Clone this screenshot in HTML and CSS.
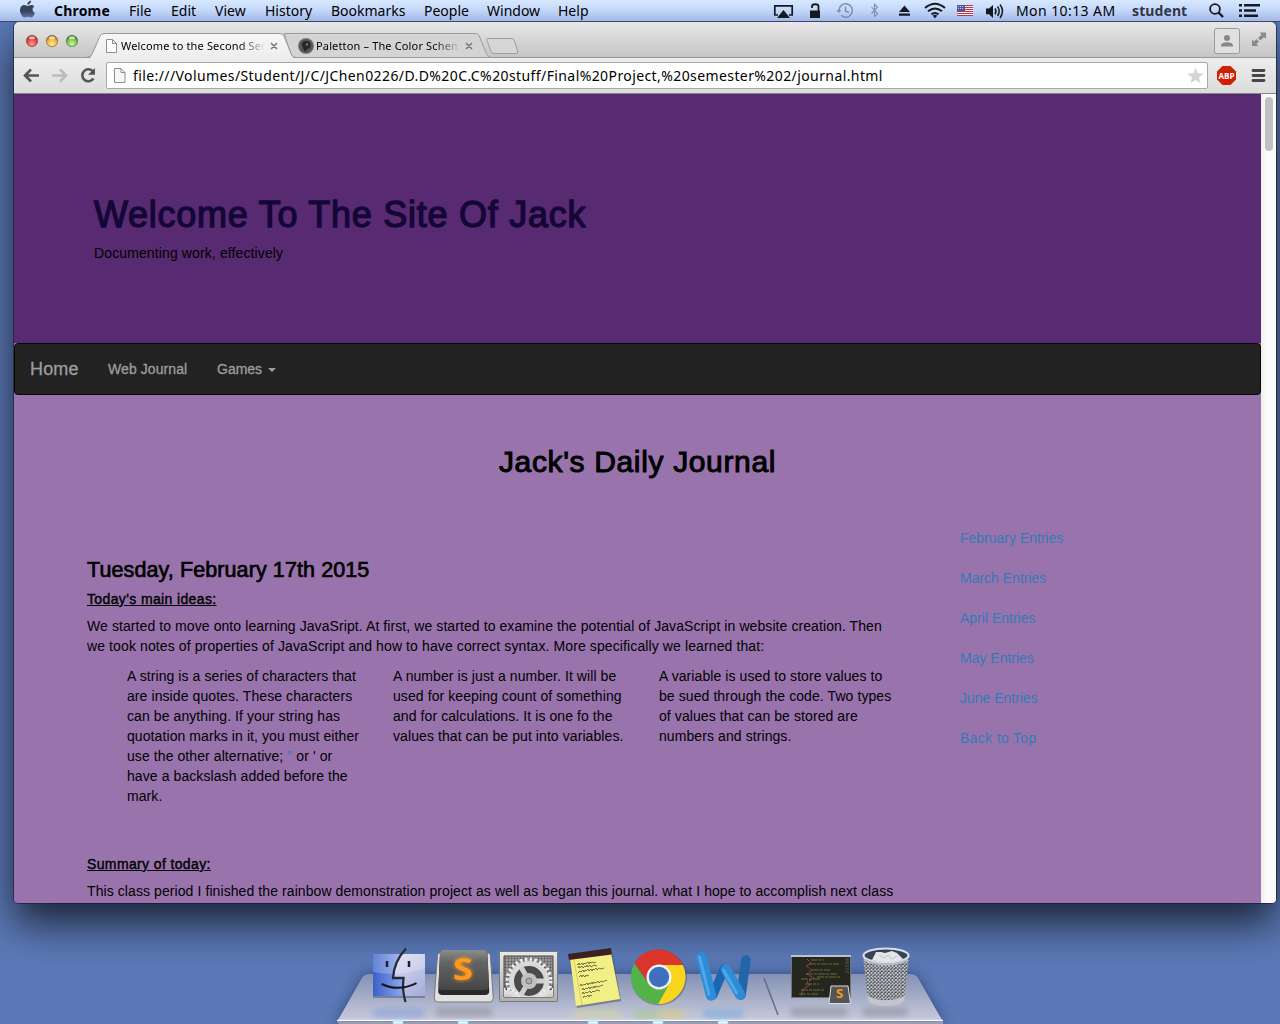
FILE: index.html
```html
<!DOCTYPE html>
<html lang="en">
<head>
<meta charset="utf-8">
<title>Welcome to the Second Semester</title>
<link rel="stylesheet" href="styles.css">
</head>
<body>
<div class="desktop">
  <header class="menubar">
    <svg class="apple" width="18" height="20" viewBox="18 1 18 20"><defs><linearGradient id="ap" x1="0" y1="0" x2="0" y2="1"><stop offset="0" stop-color="#3f4653"/><stop offset=".6" stop-color="#35405a"/><stop offset="1" stop-color="#5c75a6"/></linearGradient></defs><path fill="url(#ap)" d="M31.200 1.500c.1 2-1.800 4.300-4 4.200-.2-2 1.800-4 4-4.200zM34.300 7.500c-2.600 1.600-2.200 5.200.6 6.400-.8 2.200-2.200 4.600-3.900 4.600-1.300 0-1.700-.8-3.200-.8s-2 .8-3.200.8c-2 0-4.600-3.900-4.600-7.300 0-3.300 2.100-5.100 4.200-5.100 1.400 0 2.500.9 3.400.9.8 0 2.100-1 3.900-1 1.100 0 2.200.6 2.800 1.500z"/></svg>
    <nav class="menus">
      <b class="w-chrome">Chrome</b><span class="w-file">File</span><span class="w-edit">Edit</span><span class="w-view">View</span><span class="w-history">History</span><span class="w-bookmarks">Bookmarks</span><span class="w-people">People</span><span class="w-window">Window</span><span>Help</span>
    </nav>
    <svg class="status" width="236" height="21" viewBox="770 0 236 21">
      <path d="M778 15h-3.200V5.800h17.400V15H789" fill="none" stroke="#151a22" stroke-width="1.700"/><path d="M783.500 10l6.500 8h-13z" fill="#151a22"/>
      <path d="M810 10.500h10V18h-10z" fill="#151a22"/><path d="M812 8V6.500c0-3 6.500-3 6.500 0V11" fill="none" stroke="#151a22" stroke-width="1.800"/>
      <g fill="none" stroke="#7d8eb0" stroke-width="1.500"><path d="M839 10.500a6.700 6.700 0 1 1 2 4.800M845.500 6.500v4.500l3.500 1.500"/></g><path d="M836.500 10h5l-2.500 3z" fill="#7d8eb0"/>
      <path d="M871.500 7l6 6.500-3 3V4.300l3 3-6 6.200" fill="none" stroke="#7d8eb0" stroke-width="1.100"/>
      <path d="M904.500 5.500l5.500 6.500h-11zM899 13.500h11v2.200h-11z" fill="#151a22"/>
      <g fill="none" stroke="#151a22" stroke-width="2"><path d="M925 8q10-8.500 20 0M928 11.300q7-5.500 14 0M931.500 14.400q3.500-2.700 7 0"/></g><path d="M932.700 15.700q2.300-1.700 4.600 0l-2.300 2.600z" fill="#151a22"/>
      <path fill="#f4eef0" d="M957 5h16v11h-16z"/><path stroke="#b9394b" stroke-width="1" d="M957 5.500h16M957 7.500h16M957 9.500h16M957 11.500h16M957 13.500h16M957 15.500h16"/><path fill="#4b5599" d="M957 5h8v6h-8z"/><path stroke="#cdd1e8" stroke-width="1" stroke-dasharray="1 1" d="M958 6.500h6M958 8.500h6"/>
      <path d="M986 8.500h3l4-3.500v13l-4-3.700h-3z" fill="#151a22"/><g fill="none" stroke="#151a22" stroke-width="1.500"><path d="M995 8.500q2 2.800 0 5.800M997.500 6.500q3.500 4.500 0 9.500M1000 4.500q5 6.500 0 13.500"/></g>
    </svg>
    <span class="clock">Mon 10:13 AM</span><b class="user">student</b>
    <svg width="54" height="21" viewBox="1206 0 54 21"><circle cx="1215" cy="9" r="4.900" fill="none" stroke="#151a22" stroke-width="1.800"/><path d="M1218.500 12.500l4.500 4.500" stroke="#151a22" stroke-width="2.400"/><path stroke="#151a22" stroke-width="2.600" d="M1239 5.300h3M1239 10.500h3M1239 15.700h3M1244 5.300h16M1244 10.500h12M1244 15.700h14"/></svg>
  </header>

  <main class="window">
    <div class="tabstrip">
      <svg class="tabs-art" width="1262" height="36" viewBox="14 22 1262 36">
        <defs>
          <radialGradient id="r" cx=".5" cy=".75" r=".7"><stop offset="0" stop-color="#ff9a92"/><stop offset=".6" stop-color="#e5453f"/><stop offset="1" stop-color="#9c2b29"/></radialGradient>
          <radialGradient id="y" cx=".5" cy=".75" r=".7"><stop offset="0" stop-color="#ffe98e"/><stop offset=".6" stop-color="#eeb440"/><stop offset="1" stop-color="#96651c"/></radialGradient>
          <radialGradient id="g" cx=".5" cy=".75" r=".7"><stop offset="0" stop-color="#d0f7a4"/><stop offset=".6" stop-color="#79c152"/><stop offset="1" stop-color="#3c7329"/></radialGradient>
          <linearGradient id="t" x1="0" y1="0" x2="0" y2="1"><stop offset="0" stop-color="#f7f7f7"/><stop offset="1" stop-color="#ededed"/></linearGradient>
        </defs>
        <path d="M14 57.500H1276" stroke="#999"/>
        <path d="M284 33.500h191.500q2.800 0 3.800 2.500l7 17.500q1.500 4 4.700 4H292z" fill="#d4d4d4" stroke="#9b9b9b"/>
        <path d="M487.500 38.500h24q2 0 2.800 2l3.300 10.500q.6 2.500-1.500 2.500h-22q-2.200 0-3-2l-4.200-11q-.6-2 .6-2z" fill="#d6d6d6" stroke="#9d9d9d"/>
        <path d="M88 58.500q2.800 0 4.200-3.500l7.600-18.500q1.200-3 4.200-3h176q3 0 4.200 3l7 18q1.300 4 4.800 4z" fill="url(#t)"/>
        <path d="M86 57.500q4.500 0 6.200-3.500l7.600-17.500q1.200-3 4.200-3h176q3 0 4.200 3l7 17.500q1.500 3.500 5 3.500" fill="none" stroke="#989898"/>
        <g stroke-width=".7"><circle cx="32" cy="41" r="5.700" fill="url(#r)" stroke="#8e4a48"/><circle cx="52" cy="41" r="5.700" fill="url(#y)" stroke="#8b6a34"/><circle cx="72" cy="41" r="5.700" fill="url(#g)" stroke="#557b42"/></g><g fill="#fff" opacity=".65"><ellipse cx="32" cy="37.800" rx="3" ry="1.500"/><ellipse cx="52" cy="37.800" rx="3" ry="1.500"/><ellipse cx="72" cy="37.800" rx="3" ry="1.500"/></g>
        <path d="M106.500 39.500h6l4 4v9h-10zM112.500 39.500v4h4" fill="#fff" stroke="#8e8e8e"/>
        <path d="M271 43l6 6m0-6l-6 6M466 43l6 6m0-6l-6 6" stroke="#777" stroke-width="1.500"/>
        <circle cx="306" cy="46" r="8" fill="#7f7f7f"/><circle cx="306" cy="46" r="7" fill="#555"/><path d="M306 41a4 4 0 0 1 1 8l-2 3-2-4-1-3q0-4 4-4z" fill="#252525"/><circle cx="307" cy="44.500" r="1.300" fill="#777"/>
        <rect x="1214.500" y="28.500" width="25" height="25" rx="2" fill="#e0e0e0" stroke="#9b9b9b"/><circle cx="1227" cy="38" r="3" fill="#878787"/><path d="M1221 46.500v-1.500q1-2.700 6-2.700t6 2.700v1.500z" fill="#878787"/>
        <path d="M1259.500 32.500h6.500v6.500l-2-2-3.500 3.500-2.500-2.500 3.500-3.500zM1252 39.500l2 2 2.500-2.500 2.500 2.500-2.500 2.500 2 2H1252z" fill="#8b8b8b"/>
      </svg>
      <div class="tab first">Welcome to the Second Ser</div>
      <div class="tab second">Paletton – The Color Schem</div>
    </div>
    <div class="toolbar">
      <svg width="92" height="35" viewBox="14 58 92 35"><g fill="none" stroke-width="2.600"><path d="M39 75.500H25.500M31 69.500l-6 6 6 6" stroke="#555"/><path d="M52 75.500h13.500M60 69.500l6 6-6 6" stroke="#bbb"/><path d="M93 71.500a6 6 0 1 0 .4 7" stroke="#555"/></g><path d="M95 68v6.800h-7z" fill="#555"/></svg>
      <div class="omnibox">
        <svg width="26" height="25" viewBox="107 63 26 25"><path d="M114.500 68.500h6.500l4 4v10h-10.500zM121 68.500v4h4" fill="#f7f7f7" stroke="#8e8e8e"/></svg>
        <span class="url">file:///Volumes/Student/J/C/JChen0226/D.D%20C.C%20stuff/Final%20Project,%20semester%202/journal.html</span>
        <svg width="22" height="25" viewBox="1184 63 22 25"><path fill="#d5d5d5" d="M1194.500 67.500l2.200 5.700 6.100.3-4.800 3.900 1.700 6-5.200-3.400-5.200 3.400 1.700-6-4.800-3.900 6.100-.3z"/></svg>
      </div>
      <svg width="68" height="35" viewBox="1208 58 68 35"><path d="M1222.500 66h8l5.500 5.500v8l-5.500 5.500h-8l-5.500-5.500v-8z" fill="#d02003"/><text x="1226.500" y="79" class="abp" textLength="16" lengthAdjust="spacingAndGlyphs">ABP</text><path d="M1253 70.500h11M1253 75.500h11M1253 80.500h11" stroke="#474747" stroke-width="2.800" stroke-linecap="round"/></svg>
    </div>

    <div class="viewport">
      <div class="page">
        <section class="hero">
          <h1>Welcome To The Site Of Jack</h1>
          <p>Documenting work, effectively</p>
        </section>
        <nav class="navbar"><span class="brand">Home</span><span class="journal-link">Web Journal</span><span>Games<i class="caret"></i></span></nav>
        <h2>Jack's Daily Journal</h2>
        <div class="content">
          <article>
            <h3>Tuesday, February 17th 2015</h3>
            <h5>Today's main ideas:</h5>
            <p>We started to move onto learning JavaSript. At first, we started to examine the potential of JavaScript in website creation. Then<br><span class="loose">we took notes of properties of JavaScript and how to have correct syntax. More specifically we learned that:</span></p>
            <div class="columns">
              <p>A string is a series of characters that<br>are inside quotes. These characters<br>can be anything. If your string has<br>quotation marks in it, you must either<br>use the other alternative; <a>"</a> or ' or<br>have a backslash added before the<br>mark.</p>
              <p>A number is just a number. It will be<br>used for keeping count of something<br>and for calculations. It is one fo the<br>values that can be put into variables.</p>
              <p>A variable is used to store values to<br>be sued through the code. Two types<br>of values that can be stored are<br>numbers and strings.</p>
            </div>
            <h5 class="summary">Summary of today:</h5>
            <p>This class period I finished the rainbow demonstration project as well as began this journal. what I hope to accomplish next class</p>
          </article>
          <aside><a>February Entries</a><a>March Entries</a><a>April Entries</a><a>May Entries</a><a>June Entries</a><a class="top-link">Back to Top</a></aside>
        </div>
      </div>
      <div class="scrollbar"><div class="thumb"></div></div>
    </div>
  </main>

  <footer class="dock">
    <svg class="shelf" width="640" height="90" viewBox="320 934 640 90">
      <defs><linearGradient id="sh" x1="0" y1="0" x2="0" y2="1"><stop offset="0" stop-color="#8491b5"/><stop offset=".5" stop-color="#a5adc6"/><stop offset="1" stop-color="#c8cadc"/></linearGradient><filter id="bl" x="-20%" y="-40%" width="140%" height="180%"><feGaussianBlur stdDeviation="7"/></filter><filter id="b2" x="-50%" y="-50%" width="200%" height="200%"><feGaussianBlur stdDeviation="3"/></filter></defs>
      <path d="M364 974H916L944 1024H336z" fill="#1c2c52" opacity=".6" filter="url(#bl)"/>
      <path d="M370 974H910q6 0 8 4L942 1020H338L362 978q2-4 8-4z" fill="url(#sh)"/>
      <g filter="url(#b2)" opacity=".35"><path fill="#5c80df" d="M373 1009h52v9h-52z"/><path fill="#555" d="M436 1009h56v7h-56zM791 1009h56v7h-56zM863 1009h44v7h-44z"/><path fill="#e6e66a" d="M574 1010h46v8h-46z"/><path fill="#8dce49" d="M634 1010h25v9h-25z"/><path fill="#f5d42d" d="M659 1010h25v9h-25z"/><path fill="#328fe4" d="M703 1010h40v8h-40z"/></g>
      <path d="M337 1020.500H943" stroke="#f5f6fc" stroke-width="1.500"/><path d="M337 1021.500H943v2.500H339z" fill="#989db3"/>
      <g fill="#e9fbff" stroke="#8ecdf7" stroke-width=".7"><path d="M393 1021h10v3h-10zM458 1021h10v3h-10zM588 1021h10v3h-10zM653 1021h10v3h-10zM718 1021h10v3h-10z"/></g>
    </svg>
    <div class="apps">
      <svg width="65" height="80" viewBox="366 940 65 80"><defs><linearGradient id="f1" x1="0" y1="0" x2="1" y2="0"><stop offset="0" stop-color="#3a60c8"/><stop offset="1" stop-color="#91aaf0"/></linearGradient><linearGradient id="f2" x1="0" y1="0" x2="1" y2="1"><stop offset="0" stop-color="#e6e8fc"/><stop offset="1" stop-color="#a6acd8"/></linearGradient></defs><path fill="#33416c" opacity=".4" d="M373 994h52v4h-52z"/><path fill="url(#f2)" d="M373 954h52v42h-52z"/><path fill="url(#f1)" d="M373 954h28q-7 11-8 24h11v18h-31z"/><path fill="#fff" opacity=".22" d="M373 954h52v14q-26 9-52 4z"/><path d="M406 948.500q-12 13-13 29.500h10.500q-1.500 13 2 24" fill="none" stroke="#272a31" stroke-width="2.300"/><path d="M387 961v6M409 961v6" stroke="#182035" stroke-width="2.500"/><path d="M381.500 984q17 8 35-.8" fill="none" stroke="#141820" stroke-width="2"/></svg>
      <svg width="65" height="80" viewBox="431 940 65 80"><defs><linearGradient id="s1" x1="0" y1="0" x2="0" y2="1"><stop offset="0" stop-color="#8d8d8d"/><stop offset=".3" stop-color="#646464"/><stop offset="1" stop-color="#454545"/></linearGradient></defs><path d="M440 953h48q2 0 2.300 2l3 43q0 4-3.500 4h-52q-3.500 0-3.500-4l3.300-43q.3-2 2.400-2z" fill="#e1e1e1" stroke="#777"/><path d="M443 950h41q3 0 3.400 3l1.800 38q0 4-4 4h-43q-4 0-4-4l1.800-38q.3-3 3-3z" fill="#292929"/><path d="M443 950h41q3 0 3.400 3l1.500 33q0 4-4 4h-42.400q-4 0-4-4l1.500-33q.3-3 3-3z" fill="url(#s1)"/><text x="463" y="980" class="sublime" textLength="20" lengthAdjust="spacingAndGlyphs">S</text></svg>
      <svg width="65" height="80" viewBox="496 940 65 80"><defs><linearGradient id="p1" x1="0" y1="0" x2="0" y2="1"><stop offset="0" stop-color="#e8e8e8"/><stop offset="1" stop-color="#b0b0b0"/></linearGradient><pattern id="mesh" width="3" height="3" patternUnits="userSpaceOnUse"><path fill="#999" d="M0 0h3v3H0z"/><circle cx="1.500" cy="1.500" r="1" fill="#565656"/></pattern><clipPath id="pc"><path d="M504 956h49v41h-49z"/></clipPath></defs><rect x="499.500" y="951.500" width="58" height="50" rx="1" fill="url(#p1)" stroke="#777"/><path fill="url(#mesh)" stroke="#454545" d="M504 956h49v41h-49z"/><g clip-path="url(#pc)" fill="none"><path fill="#333" d="M504 986l14 11h-14zM553 986l-14 11h14z"/><circle cx="529" cy="981" r="19" fill="#4a4a4a"/><circle cx="529" cy="981" r="21.500" stroke="#eee" stroke-width="4" stroke-dasharray="2.400 2.425"/><circle cx="529" cy="981" r="17.500" stroke="#d9d9d9" stroke-width="5"/><path d="M529 981l-8-14M529 981h16M529 981l-8 14" stroke="#cfcfcf" stroke-width="5"/><circle cx="529" cy="981" r="8" fill="#c0c0c0"/><circle cx="529" cy="981" r="3" stroke="#777" fill="#aaa"/><g fill="#ccc" stroke="#ddd" stroke-width="4"><circle cx="507" cy="1002" r="10"/><circle cx="551" cy="1002" r="10"/></g><g stroke="#eee" stroke-width="3" stroke-dasharray="2.200 2.200"><circle cx="507" cy="1002" r="13"/><circle cx="551" cy="1002" r="13"/></g></g></svg>
      <svg width="65" height="80" viewBox="561 940 65 80"><path fill="#454c50" opacity=".5" d="M569 957l43-6 9 50-44 7z"/><path fill="#f3ef87" d="M570 958l41-5 9 46-44 7z"/><path fill="#3d2020" d="M568 954l43-6 .7 6.500-42.700 5.500z"/><path d="M574 960l8 45" stroke="#dcb750" stroke-width=".7"/><g fill="none" stroke="#55572d" stroke-width=".8" stroke-linejoin="round"><path d="M577 964l1 1 1-2 1 2 2-2 1 2 1-2 1 1 3-2 1 2 1-2 1 1 2-1 1 1 2-1M578 968l1-2 1 2 2-2 1 2 2-2 1 1 1-2 1 2 2-2 1 2 3-2 3 1M578 973l2-2 1 1 2-2 1 2 1-2 1 1 2-2 1 2 2-2 1 2 1-2 1 1 2-2 1 2 2-2 2 1 3-1M579 977l2-2 1 2 1-2 2 2 1-2 1 1 2-1M580 986l1-2 1 2 2-2 1 1 2-2 1 2 1-2 2 1 1-2 1 2 1-2 2 1 2-2 1 2 2-2 2 1 3-2 1 1M582 990l1-2 1 2 2-2 1 1 2-2 1 2 1-2 2 1 1-2 1 2 1-2 2 1 2-1 3-1M582 994l1-2 1 2 2-2 1 1 3-2 1 2 2-2 1 1 3-2 3 1M583 998l1-2 2 1 2-2 1 2 1-2 2 1"/></g></svg>
      <svg width="65" height="80" viewBox="626 940 65 80"><circle cx="659" cy="977.500" r="28" fill="#26385c" opacity=".35"/><path fill="#dc3529" d="M634.500 963A27.500 27.500 0 0 1 683 965H659z"/><path fill="#fbd41c" d="M683 965A27.500 27.500 0 0 1 658 1004l11-21-10-18z"/><path fill="#54b348" d="M634.500 963A27.500 27.500 0 0 0 658 1004l12-21H648z"/><path fill="#dc3529" d="M634.500 963l14 20 11-18z"/><circle cx="659" cy="977" r="12.500" fill="#f2f5f7"/><circle cx="659" cy="977" r="10.200" fill="#3e70bd"/></svg>
      <svg width="65" height="80" viewBox="691 940 65 80"><g fill="none" stroke-linecap="round" stroke-linejoin="round"><path d="M746 960l-5 35" stroke="#2265ab" stroke-width="9.500"/><path d="M713 995l11-26" stroke="#1b66b2" stroke-width="9"/><path d="M701.500 957.500l9.500 38" stroke="#2d8cd8" stroke-width="10.500"/><path d="M726 969.500l14 25" stroke="#2d8cd8" stroke-width="10.500"/><path d="M699.500 957l9.500 37M723.500 970l13 23" stroke="#5db4f0" stroke-width="3" opacity=".7"/></g></svg>
      <svg width="30" height="80" viewBox="756 940 30 80"><path d="M764 978l14 37" stroke="#636d88" stroke-width="1.500"/></svg>
      <svg width="70" height="80" viewBox="786 940 70 80"><path fill="#25271f" stroke="#70747c" d="M791.500 956.500h59v41h-59z"/><path d="M791 956h60" stroke="#ddd" stroke-width="1.500"/><g fill="none" stroke-width="1"><path d="M807 959l4 4-5 3 6 4-5 4 7 4-7 4 3 3-7 4-2 7" stroke="#a84164" stroke-dasharray="3 1"/><path d="M811 960h13M809 964h30M812 970h18M806 974h31M801 979h20M817 977h24M805 984h14M801 990h23M799 994h20" stroke="#686d34" stroke-dasharray="7 1 3 1"/><path d="M845 959h4M846 961h3M845 963h4M845 966h4M846 969h3M845 972h4" stroke="#555949"/></g><path d="M831 986h17l2.500 17.500h-21.500z" fill="#555" stroke="#ddd"/><text x="839.500" y="998" class="mini-s">S</text></svg>
      <svg width="60" height="80" viewBox="856 940 60 80"><defs><pattern id="wire" width="3.500" height="3.500" patternUnits="userSpaceOnUse"><path fill="#3b4047" d="M0 0h4v4H0z"/><path d="M0 0l3.500 3.500M3.500 0L0 3.500" stroke="#cfd1d5" stroke-width=".9"/></pattern></defs><path d="M863 957l5 42q1 6 18 6t18-6l5-42z" fill="url(#wire)"/><path d="M867.500 998q1 8 18.500 8t18.500-8l.4-3q-5 5-18.900 5t-18.900-5z" fill="#c3c5cd"/><ellipse cx="886" cy="955" rx="22.500" ry="6.300" fill="#34445b"/><path fill="#e4e5e6" d="M872 960l4-8 5 0 4 1 7-2 5 2 6 6-4 3-13 1z"/><path d="M879 955l5 3 4-3 4 4 5-3" fill="none" stroke="#c0c3c8"/><ellipse cx="886" cy="955.500" rx="22.500" ry="7" fill="none" stroke="#dadde4" stroke-width="2.200"/><path d="M864 960q22 9 44 0" fill="none" stroke="#b6bac5" stroke-width="2"/></svg>
    </div>
  </footer>
</div>
</body>
</html>
```
FILE: styles.css
```css
* { box-sizing: border-box; }
body { margin: 0; font-family: "Noto Sans", "Open Sans", sans-serif; }
svg { display: block; flex: none; }
.desktop { position: relative; width: 1280px; height: 1024px; overflow: hidden; background: #5b79b7; }

.menubar { position: relative; z-index: 2; display: flex; align-items: flex-start; height: 22px; padding-left: 18px; font-size: 14px; line-height: 21px; color: #000; white-space: nowrap; background: linear-gradient(#d7e8ff, #c5d9fa 45%, #a5b8e6); border-bottom: 1px solid #39496e; }
.menus { display: flex; gap: 19px; width: 734px; padding-left: 18px; }
.w-chrome { width: 56px; letter-spacing: .2px; }
.w-file { width: 23px; }
.w-edit { width: 25px; }
.w-view { width: 31px; }
.w-history { width: 47px; }
.w-bookmarks { width: 74px; }
.w-people { width: 44px; }
.w-window { width: 52px; }
.clock { width: 126px; padding-left: 10px; letter-spacing: .42px; }
.user { width: 74px; color: #303746; letter-spacing: .1px; }

.window { position: absolute; left: 14px; top: 22px; width: 1262px; height: 881px; border-radius: 5px 5px 4px 4px; overflow: hidden; }
.desktop::before { content: ""; position: absolute; left: 14px; top: 22px; width: 1262px; height: 881px; border-radius: 5px; box-shadow: 0 0 0 1px rgba(20, 28, 55, .65), 0 20px 42px rgba(0, 0, 0, .72); }
.tabstrip { position: relative; display: flex; height: 36px; padding: 14px 0 0 107px; font-size: 11px; line-height: 20px; color: #000; background: linear-gradient(#e8e8e8, #c4c4c4); }
.tabs-art { position: absolute; left: 0; top: 0; }
.tab { position: relative; width: 144px; overflow: hidden; white-space: nowrap; letter-spacing: .15px; -webkit-mask-image: linear-gradient(90deg, #000 82%, transparent); }
.second { margin-left: 51px; }
.toolbar { display: flex; align-items: center; height: 36px; background: linear-gradient(#ededed, #dcdcdc); border-bottom: 1px solid #858585; }
.omnibox { display: flex; align-items: center; width: 1102px; height: 27px; border: 1px solid #a7a7a7; border-radius: 2px; background: #fff; }
.url { width: 1052px; font-size: 14px; letter-spacing: .404px; line-height: 25px; color: #000; white-space: nowrap; }
.abp { font: bold 8.500px "Open Sans", sans-serif; fill: #fff; text-anchor: middle; }

.viewport { display: flex; height: 809px; }
.page { width: 1247px; background: #9974ac; font: 14px/20px "Liberation Sans", sans-serif; color: #000; overflow: hidden; white-space: nowrap; }
.hero { height: 249px; padding: 101px 0 0 80px; background: #582a71; }
h1, h2, h3, h5 { margin: 0; font-weight: 400; line-height: 1.1; -webkit-text-stroke: .7px currentColor; }
h1 { font-size: 36px; letter-spacing: .74px; color: #140636; -webkit-text-stroke-width: 1.3px; }
.hero p { margin: 8px 0 0; letter-spacing: .12px; }
.navbar { display: flex; align-items: center; height: 52px; padding-left: 15px; border: 1px solid #080808; border-radius: 4px; background: #222; color: #9d9d9d; -webkit-text-stroke: .3px #9d9d9d; }
.brand { width: 78px; font-size: 18px; letter-spacing: .15px; }
.journal-link { width: 109px; letter-spacing: .08px; }
.caret { display: inline-block; margin-left: 6px; vertical-align: middle; border: 4px solid transparent; border-top-color: #9d9d9d; border-bottom: 0; }
h2 { margin-top: 50px; font-size: 30px; letter-spacing: .65px; text-align: center; -webkit-text-stroke-width: 1px; }
.content { display: flex; padding-left: 73px; }
article { width: 873px; padding-top: 80px; letter-spacing: .085px; }
h3 { font-size: 21.500px; letter-spacing: .1px; line-height: 24px; }
h5 { margin: 10px 0 9px; font-size: 14px; letter-spacing: .37px; line-height: 15px; text-decoration: underline; -webkit-text-stroke-width: .4px; }
p { margin: 0 0 10px; }
.loose { letter-spacing: .11px; }
.columns { display: grid; grid-template-columns: repeat(3, 266px); height: 181px; padding-left: 40px; }
a { color: #337ab7; }
aside { display: flex; flex-direction: column; gap: 20px; padding-top: 50px; }
.top-link { letter-spacing: .33px; }
.scrollbar { width: 15px; padding: 3px 3px 0 4px; background: linear-gradient(90deg, #ededed, #fbfbfb 35%); }
.thumb { width: 8px; height: 54px; border-radius: 4px; background: #c1c1c1; }

.dock { position: absolute; left: 320px; top: 934px; width: 640px; height: 90px; }
.shelf { position: absolute; left: 0; top: 0; overflow: visible; }
.apps { position: relative; display: flex; padding: 6px 0 0 46px; }
.sublime { font: bold 30px "Open Sans", sans-serif; fill: #ff981c; text-anchor: middle; filter: drop-shadow(0 0 2px #ff9e20); }
.mini-s { font: bold 13px "Open Sans", sans-serif; fill: #ff981c; text-anchor: middle; }
```
